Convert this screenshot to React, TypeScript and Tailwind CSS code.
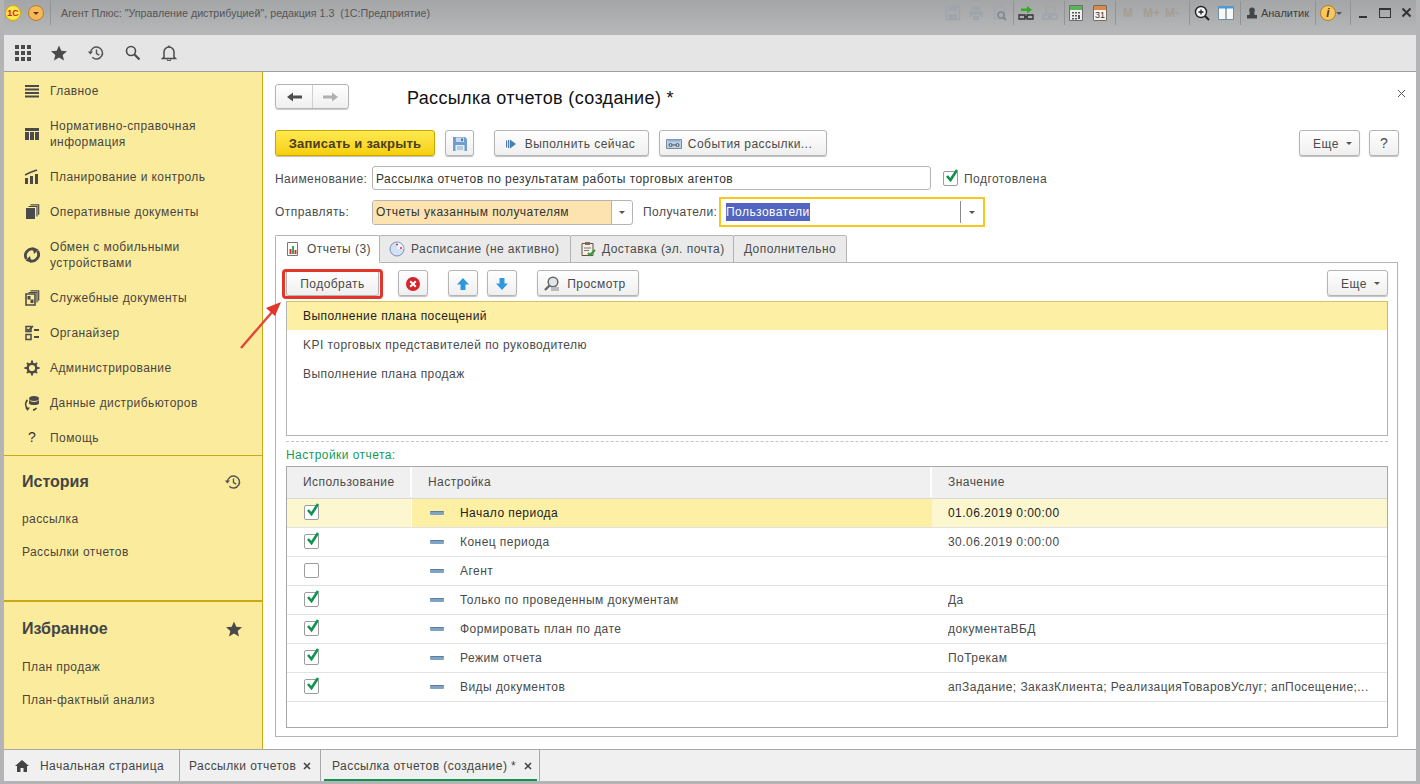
import type { ReactNode } from "react";

const F = "#4a4a4a";

function Svg({ w = 16, h = 16, children, className = "" }: { w?: number; h?: number; children: ReactNode; className?: string }) {
  return (
    <svg width={w} height={h} viewBox={`0 0 ${w} ${h}`} className={`shrink-0 ${className}`}>
      {children}
    </svg>
  );
}

const HistoryIcon = ({ c = "#555" }: { c?: string }) => (
  <Svg w={18} h={16}>
    <path d="M3.5 8a6 6 0 1 1 1.8 4.3" fill="none" stroke={c} strokeWidth="1.5" />
    <path d="M0.8 6.5h5.2L3.4 9.6z" fill={c} />
    <path d="M9.5 4.5v4l2.8 1.6" fill="none" stroke={c} strokeWidth="1.4" />
  </Svg>
);

const menuIcons: Record<string, ReactNode> = {
  main: (
    <Svg>
      <path d="M1 2h14v2H1zM1 5.5h14v2H1zM1 9h14v2H1zM1 12.5h14v2H1z" fill={F} />
    </Svg>
  ),
  nsi: (
    <Svg>
      <path d="M1 2h14v3H1zM1 6h4v8H1zM6 6h4v8H6zM11 6h4v8h-4z" fill={F} />
    </Svg>
  ),
  plan: (
    <Svg>
      <path d="M1 9h3v6H1zM6 7h3v8H6zM11 5h3v10h-3z" fill={F} />
      <path d="M1 6l5-2.500 7-2.500" fill="none" stroke={F} strokeWidth="1.400" />
    </Svg>
  ),
  docs: (
    <Svg>
      <path d="M2 4h9v11H2z" fill={F} />
      <path d="M4.500 2.500h8.500v10M6.500 0.800h8.200v10" fill="none" stroke={F} strokeWidth="1.200" />
    </Svg>
  ),
  sync: (
    <Svg>
      <path d="M2.500 12a6.500 6.500 0 0 1 8-9.500M13.500 4a6.500 6.500 0 0 1-8 9.500" fill="none" stroke={F} strokeWidth="2.800" />
      <path d="M8.500 0l6 2.500-4.500 4.500zM7.500 16l-6-2.500L6 9z" fill={F} />
    </Svg>
  ),
  service: (
    <Svg>
      <path d="M2 4h9v11H2z" fill="none" stroke={F} strokeWidth="1.600" />
      <path d="M3.500 6h3v3.500h-3zM6.500 9.500h3v3.500h-3z" fill={F} />
      <path d="M4.500 2.500h8.500v10M6.500 0.800h8.200v10" fill="none" stroke={F} strokeWidth="1.200" />
    </Svg>
  ),
  org: (
    <Svg>
      <path d="M2 1.500h5v5H2zM2 9.500h5v5H2z" fill="none" stroke={F} strokeWidth="1.500" />
      <path d="M3 4l1.500 1.500L9 1" fill="none" stroke={F} strokeWidth="1.600" />
      <path d="M10 4h5v2h-5zM10 11h5v2h-5z" fill={F} />
    </Svg>
  ),
  admin: (
    <Svg>
      <circle cx="8" cy="8" r="4.300" fill="none" stroke={F} strokeWidth="2.400" />
      <path d="M7 0.500h2v3H7zM7 12.500h2v3H7zM0.500 7h3v2h-3zM12.500 7h3v2h-3zM2.300 3.700l1.400-1.400 2 2-1.400 1.400zM10.300 11.700l1.400-1.400 2 2-1.400 1.400zM12.300 2.300l1.400 1.400-2 2-1.400-1.400zM4.300 10.300l1.400 1.400-2 2-1.400-1.400z" fill={F} />
    </Svg>
  ),
  dist: (
    <Svg>
      <ellipse cx="10" cy="3.500" rx="5" ry="2.500" fill={F} />
      <path d="M5 5v3.500c1 2 9 2 10 0V5c-2 2.500-8 2.500-10 0z" fill={F} />
      <path d="M3.500 5a6 6 0 0 0-.5 8M9 15c1.500 0 2.500-.8 3.500-2" fill="none" stroke={F} strokeWidth="1.800" />
      <path d="M1 12.500h5L3.500 16z" fill={F} />
    </Svg>
  ),
};

const menu = [
  { icon: menuIcons.main, text: "Главное" },
  { icon: menuIcons.nsi, text: "Нормативно-справочная информация", two: true },
  { icon: menuIcons.plan, text: "Планирование и контроль" },
  { icon: menuIcons.docs, text: "Оперативные документы" },
  { icon: menuIcons.sync, text: "Обмен с мобильными устройствами", two: true },
  { icon: menuIcons.service, text: "Служебные документы" },
  { icon: menuIcons.org, text: "Органайзер" },
  { icon: menuIcons.admin, text: "Администрирование" },
  { icon: menuIcons.dist, text: "Данные дистрибьюторов" },
  { icon: <span className="w-4 text-center text-[14px] text-[#333]">?</span>, text: "Помощь" },
];

function Sep({ className = "" }: { className?: string }) {
  return <div className={`h-[24px] w-px shrink-0 bg-[#949494] ${className}`} />;
}

function Caret({ c = "#555" }: { c?: string }) {
  return (
    <Svg w={6} h={3}>
      <path d="M0 0h6L3 3z" fill={c} />
    </Svg>
  );
}

function TitleBar() {
  const dim = "#9fa5ab";
  return (
    <div className="flex h-[35px] shrink-0 items-center bg-linear-to-b from-[#a4a5a7] to-[#b7b8ba] pb-[9px] pl-[5px] pr-[7px] text-[10.7px] text-[#555]">
      <div className="flex h-[16px] w-[16px] items-center justify-center rounded-full border border-[#d8a800] bg-[#fde74c] text-[9px] font-bold leading-none text-[#d3241d]">
        1С
      </div>
      <div className="ml-[7px] flex h-[16px] w-[16px] items-center justify-center rounded-full border border-[#b67f20] bg-[#f5b95a]">
        <Caret c="#5b3c10" />
      </div>
      <Sep className="ml-[6px]" />
      <span className="ml-[10px] whitespace-pre">Агент Плюс: "Управление дистрибуцией", редакция 1.3  (1С:Предприятие)</span>

      <div className="ml-auto flex items-center">
        <Svg>
          <path d="M1.500 1.500h13v13h-13z" fill="none" stroke={dim} strokeWidth="1.500" />
          <path d="M4 2h8v4H4zM4 9h8v5H4z" fill={dim} />
        </Svg>
        <Svg className="ml-[7px]">
          <path d="M4 1h8v4H4zM1 6h14v6h-3v-2H4v2H1zM5 11h6v4H5z" fill={dim} />
        </Svg>
        <Svg className="ml-[8px]">
          <path d="M2.500 1h7l3 3v10h-10z" fill="none" stroke={dim} strokeWidth="1.200" />
          <circle cx="9" cy="10" r="3" fill="none" stroke="#80878e" strokeWidth="1.500" />
          <path d="M11 12l3 3" stroke="#80878e" strokeWidth="1.800" />
        </Svg>
        <Sep className="ml-[5px]" />
        <Svg className="ml-[4px]">
          <path d="M3 3.500h6V1l5 3.800-5 3.700V6H3z" fill="#2fae1f" />
          <path d="M1 10h6v4H1zM9 10h6v4H9z" fill="none" stroke="#333" strokeWidth="1.300" />
          <path d="M6 12h4" stroke="#333" strokeWidth="1.300" />
        </Svg>
        <Svg className="ml-[8px]">
          <path d="M4 1.500h7l2 2v5H4z" fill="none" stroke={dim} strokeWidth="1.200" />
          <path d="M1 10h6v4H1zM9 10h6v4H9z" fill="none" stroke={dim} strokeWidth="1.300" />
          <path d="M6 12h4" stroke={dim} strokeWidth="1.300" />
        </Svg>
        <Sep className="ml-[6px]" />
        <Svg w={14} className="ml-[4px]">
          <path d="M.5.500h13v15H.5z" fill="#f0f0f0" stroke="#6d6d6d" />
          <path d="M1 1h12v4H1z" fill="#58b558" />
          <path d="M3 7h2v1.500H3zM6 7h2v1.500H6zM9 7h2v1.500H9zM3 10h2v1.500H3zM6 10h2v1.500H6zM9 10h2v4H9zM3 13h2v1.500H3zM6 13h2v1.500H6z" fill="#555" />
        </Svg>
        <div className="ml-[10px] flex h-[16px] w-[14px] flex-col overflow-hidden rounded-[1px] border border-[#7a6a58] bg-[#f4f4f4]">
          <div className="h-[4px] shrink-0 bg-[#d98a4a]" />
          <span className="text-center text-[9px] leading-[11px] text-[#333]">31</span>
        </div>
        <Sep className="ml-[8px]" />
        <div className="ml-[7px] flex items-center text-[12px] font-bold text-[#a59d93]">
          <span className="w-[20px]">M</span>
          <span className="w-[22px]">M+</span>
          <span className="w-[16px]">M-</span>
        </div>
        <Sep className="ml-[8px]" />
        <Svg className="ml-[4px]">
          <circle cx="7" cy="7" r="5.500" fill="#f5f5f5" stroke="#222" strokeWidth="1.400" />
          <path d="M4.500 7h5M7 4.500v5" stroke="#222" strokeWidth="1.300" />
          <path d="M11 11l4 4" stroke="#222" strokeWidth="2" />
        </Svg>
        <Svg className="ml-[8px]">
          <path d="M.5 1.500h15v13H.5z" fill="#f8f8f8" stroke="#6f8ca8" />
          <path d="M1 1h14v2.500H1z" fill="#4d9ad4" />
          <path d="M8 3v11" stroke="#46637f" />
        </Svg>
        <Sep className="ml-[6px]" />
        <Svg w={12} h={12} className="ml-[5px]">
          <circle cx="6" cy="3.300" r="2.800" fill="#444" />
          <path d="M3.500 5.500h5v2.500H11v3.500H1V8h2.500z" fill="#444" />
        </Svg>
        <span className="ml-[3px] text-[11px] text-[#3d3d3d]">Аналитик</span>
        <Sep className="ml-[6px]" />
        <div className="ml-[4px] flex h-[16px] w-[16px] items-center justify-center rounded-full border border-[#b67f20] bg-[#f8c860] text-[12px] font-bold italic leading-none text-[#5b3c10]">
          i
        </div>
        <Caret c="#555" />
        <Sep className="ml-[8px]" />
        <div className="ml-[8px] mt-[8px] h-[2px] w-[8px] bg-[#333]" />
        <div className="ml-[12px] h-[10px] w-[12px] border border-t-2 border-[#333]" />
        <Svg w={12} h={12} className="ml-[10px]">
          <path d="M1.500 1.500l8 8M9.500 1.500l-8 8" stroke="#333" strokeWidth="2" />
        </Svg>
      </div>
    </div>
  );
}

function TopBar() {
  return (
    <div className="flex h-[37px] shrink-0 items-center gap-[20px] border-b border-[#a0a0a0] bg-[#e5e5e5] pl-[10px]">
      <Svg w={18} h={18}>
        <path d="M1 1h4v4H1zM7 1h4v4H7zM13 1h4v4h-4zM1 7h4v4H1zM7 7h4v4H7zM13 7h4v4h-4zM1 13h4v4H1zM7 13h4v4H7zM13 13h4v4h-4z" fill={F} />
      </Svg>
      <Svg className="-ml-px">
        <path d="M8 .5l2.300 5.200 5.700.5-4.300 3.700 1.300 5.600L8 12.500l-5 3 1.300-5.600L0 6.200l5.700-.5z" fill={F} />
      </Svg>
      <HistoryIcon />
      <Svg>
        <circle cx="6" cy="6" r="4.500" fill="none" stroke={F} strokeWidth="1.600" />
        <path d="M9.500 9.500l5 5" stroke={F} strokeWidth="2.200" />
      </Svg>
      <Svg>
        <path d="M3 12V7a5 5 0 0 1 10 0v5l1.500 1.500h-13z" fill="none" stroke={F} strokeWidth="1.500" />
        <path d="M6.500 14.500a1.500 1.500 0 0 0 3 0M8 .5v2" stroke={F} strokeWidth="1.300" fill="none" />
      </Svg>
    </div>
  );
}

function Sidebar() {
  return (
    <aside className="flex w-[259px] shrink-0 flex-col border-r border-[#c9a914] bg-[#fbec9d] text-[12px] tracking-[0.42px] text-[#4a4440]">
      <div className="flex h-[384px] shrink-0 flex-col border-b border-[#c9a914] pt-[1px]">
        {menu.map((m) => (
          <div key={m.text} className={`flex items-center ${m.two ? "h-[51px]" : "h-[35px]"} shrink-0`}>
            <div className="ml-[20px] flex w-[26px] shrink-0">{m.icon}</div>
            <span className={`leading-[16px] ${m.two ? "w-[175px]" : ""}`}>{m.text}</span>
          </div>
        ))}
      </div>
      <div className="flex h-[146px] shrink-0 flex-col border-b-2 border-[#c9a914] pl-[18px] pr-[20px]">
        <div className="mt-[15px] flex h-[22px] items-center justify-between">
          <span className="text-[16px] font-bold tracking-normal text-[#444]">История</span>
          <HistoryIcon />
        </div>
        <div className="mt-[16px] flex h-[20px] items-center">рассылка</div>
        <div className="mt-[13px] flex h-[20px] items-center">Рассылки отчетов</div>
      </div>
      <div className="flex flex-1 flex-col pl-[18px] pr-[20px]">
        <div className="mt-[16px] flex h-[22px] items-center justify-between">
          <span className="text-[16px] font-bold tracking-normal text-[#444]">Избранное</span>
          <Svg>
            <path d="M8 .5l2.300 5.200 5.700.5-4.300 3.700 1.300 5.600L8 12.500l-5 3 1.300-5.600L0 6.200l5.700-.5z" fill={F} />
          </Svg>
        </div>
        <div className="mt-[17px] flex h-[20px] items-center">План продаж</div>
        <div className="mt-[13px] flex h-[20px] items-center">План-фактный анализ</div>
      </div>
    </aside>
  );
}

function Btn({ children, className = "", yellow = false }: { children: ReactNode; className?: string; yellow?: boolean }) {
  return (
    <div
      className={`relative flex h-[26px] shrink-0 items-center justify-center rounded-[3px] border pt-[1px] shadow-[0_1px_1px_rgba(0,0,0,0.25)] ${
        yellow
          ? "border-[#c8a800] bg-linear-to-b from-[#ffe94d] to-[#f7cf00] font-bold tracking-[0.2px] text-[#4a4020]"
          : "border-[#b4b4b4] bg-linear-to-b from-white to-[#efefef] tracking-[0.45px] text-[#4a4a4a]"
      } ${className}`}
    >
      {children}
    </div>
  );
}

function CheckBox({ on = true }: { on?: boolean }) {
  return (
    <div className="relative h-[15px] w-[15px] shrink-0 rounded-[2px] border border-[#9c9c9c] bg-white">
      {on && (
        <svg width="17" height="16" viewBox="0 0 17 16" className="absolute -top-[4px] left-0">
          <path d="M3 8l3.500 4L13 2" fill="none" stroke="#11934f" strokeWidth="2.600" />
        </svg>
      )}
    </div>
  );
}

function Dash() {
  return <div className="h-[4px] w-[14px] rounded-[1px] border-t border-[#5d7d99] bg-[#7fa3c4]" />;
}

const rows = [
  { on: true, name: "Начало периода", val: "01.06.2019 0:00:00", cur: true },
  { on: true, name: "Конец периода", val: "30.06.2019 0:00:00" },
  { on: false, name: "Агент", val: "" },
  { on: true, name: "Только по проведенным документам", val: "Да" },
  { on: true, name: "Формировать план по дате", val: "документаВБД" },
  { on: true, name: "Режим отчета", val: "ПоТрекам" },
  { on: true, name: "Виды документов", val: "апЗадание; ЗаказКлиента; РеализацияТоваровУслуг; апПосещение;..." },
];

function ReportsTab() {
  return (
    <div className="relative flex h-[475px] flex-col border border-[#b4b4b4] pl-[10px] pr-[9px] pt-[7px] tracking-[0.45px]">
      <div className="flex h-[26px] shrink-0 items-center">
        <Btn className="w-[93px]">
          Подобрать
          <span className="absolute -bottom-[4px] -left-[5px] -right-[5px] -top-[2px] rounded-[4px] border-[3px] border-[#e2362b]" />
        </Btn>
        <Btn className="ml-[19px] w-[30px]">
          <Svg>
            <circle cx="8" cy="8" r="7" fill="#d6232c" />
            <path d="M5.200 5.200l5.600 5.600M10.800 5.200l-5.600 5.600" stroke="#fff" strokeWidth="2" />
          </Svg>
        </Btn>
        <Btn className="ml-[20px] w-[30px]">
          <Svg w={14} h={14}>
            <path d="M7 1l6 6.500H9.500V13h-5V7.500H1z" fill="#2f97dc" />
          </Svg>
        </Btn>
        <Btn className="ml-[9px] w-[30px]">
          <Svg w={14} h={14}>
            <path d="M7 13L1 6.500h3.500V1h5v5.500H13z" fill="#2f97dc" />
          </Svg>
        </Btn>
        <Btn className="ml-[20px] w-[102px] gap-[7px] pr-[6px]">
          <Svg>
            <circle cx="9" cy="6" r="4.800" fill="#dfe5ea" stroke="#666" strokeWidth="1.500" />
            <path d="M5.500 9.500L1 14" stroke="#666" strokeWidth="2.400" />
            <path d="M7 11h8v4H7z" fill="#bbb" />
          </Svg>
          Просмотр
        </Btn>
        <Btn className="ml-auto w-[61px] gap-[7px] pl-[6px]">
          Еще <Caret />
        </Btn>
      </div>

      <div className="mt-[5px] h-[135px] shrink-0 border border-[#b4b4b4] border-t-[#d9c45c]">
        <div className="flex h-[28px] items-center bg-[#fdf0a5] pl-[16px] text-[#222]">Выполнение плана посещений</div>
        <div className="flex h-[29px] items-center pl-[16px]">KPI торговых представителей по руководителю</div>
        <div className="flex h-[29px] items-center pl-[16px]">Выполнение плана продаж</div>
      </div>

      <div className="mt-[5px] shrink-0 border-t border-dashed border-[#c4c4c4]" />
      <div className="mt-[5px] flex h-[16px] shrink-0 items-center text-[#169a55]">Настройки отчета:</div>

      <div className="mt-[3px] flex h-[262px] shrink-0 flex-col border border-[#a8a8a8]">
        <div className="grid h-[32px] shrink-0 grid-cols-[125px_520px_1fr] border-b border-[#d8d8d8] bg-[#f0f0f0] pb-[1px]">
          <div className="flex items-center border-r-2 border-white pl-[16px]">Использование</div>
          <div className="flex items-center border-r-2 border-white pl-[16px]">Настройка</div>
          <div className="flex items-center pl-[16px]">Значение</div>
        </div>
        {rows.map((r) => (
          <div
            key={r.name}
            className={`grid h-[29px] shrink-0 grid-cols-[125px_520px_1fr] border-b border-[#e2e2e2] ${r.cur ? "bg-[#fdf7cf] text-[#222]" : ""}`}
          >
            <div className={`flex items-center pb-[2px] pl-[17px] ${r.cur ? "border-r border-white" : ""}`}>
              <CheckBox on={r.on} />
            </div>
            <div className={`flex items-center pl-[18px] ${r.cur ? "bg-[#fdf0a5]" : ""}`}>
              <Dash />
              <span className="ml-[16px]">{r.name}</span>
            </div>
            <div className="flex min-w-0 items-center pl-[16px]">
              <span className="truncate">{r.val}</span>
            </div>
          </div>
        ))}
      </div>

      <svg width="46" height="50" viewBox="0 0 46 50" className="absolute left-[-36px] top-[36px]">
        <path d="M1 49L33 12" stroke="#e2453a" strokeWidth="2.400" />
        <path d="M41 3L26 9l9 8z" fill="#e2362b" />
      </svg>
    </div>
  );
}

function Tabs() {
  const cls = "flex h-[28px] shrink-0 items-center border border-[#b4b4b4] rounded-t-[2px] tracking-[0.45px]";
  return (
    <div className="-mb-px flex">
      <div className={`${cls} relative z-10 w-[105px] border-b-white bg-white pl-[10px] tracking-[0.3px]`}>
        <Svg w={14} className="mr-[7px]">
          <path d="M1.500 1.500h10v13h-10z" fill="#fff" stroke="#777" />
          <path d="M3.500 8h2v5h-2z" fill="#d0342c" />
          <path d="M6 5h2v8H6z" fill="#3aa655" />
          <path d="M8.500 9h2v4h-2z" fill="#d0342c" />
        </Svg>
        Отчеты (3)
      </div>
      <div className={`${cls} -ml-px w-[192px] bg-[#eaeaea] pl-[9px]`}>
        <Svg className="mr-[6px]">
          <circle cx="8" cy="8" r="7" fill="#d3e1f5" stroke="#7d8fb8" />
          <path d="M8 1.500A6.500 6.500 0 0 1 14.500 8H8z" fill="#eef2fa" />
          <circle cx="8" cy="3.500" r="1" fill="#d0342c" />
          <circle cx="12" cy="7" r="1" fill="#d0342c" />
        </Svg>
        Расписание (не активно)
      </div>
      <div className={`${cls} -ml-px w-[164px] bg-[#eaeaea] pl-[9px]`}>
        <Svg className="mr-[6px]">
          <path d="M2 2.500h11v12H2z" fill="#f4f0e8" stroke="#6d4a3a" />
          <path d="M5 1h5v3H5z" fill="#8a6a58" />
          <path d="M4 7h7M4 9.500h5" stroke="#777" />
          <path d="M8 12l2 2 5-5" fill="none" stroke="#2c9a3a" strokeWidth="2" />
        </Svg>
        Доставка (эл. почта)
      </div>
      <div className={`${cls} -ml-px w-[114px] justify-center bg-[#eaeaea]`}>Дополнительно</div>
    </div>
  );
}

function Form() {
  return (
    <main className="flex min-w-0 flex-1 flex-col bg-white pl-[12px] pr-[17px] pt-[12px] text-[12px] text-[#4a4a4a]">
      <div className="flex h-[25px] shrink-0 items-center">
        <div className="flex h-[25px] w-[74px] rounded-[3px] border border-[#b4b4b4] bg-linear-to-b from-white to-[#efefef] shadow-[0_1px_1px_rgba(0,0,0,0.2)]">
          <div className="flex w-[37px] items-center justify-center border-r border-[#cfcfcf]">
            <Svg w={15} h={10}>
              <path d="M0 5l6-4.500V3.500h9v3H6v3z" fill="#4d4d4d" />
            </Svg>
          </div>
          <div className="flex flex-1 items-center justify-center">
            <Svg w={15} h={10}>
              <path d="M15 5L9 .5V3.500H0v3h9v3z" fill="#b0b0b0" />
            </Svg>
          </div>
        </div>
        <h1 className="ml-[58px] mt-[4px] text-[18px] leading-[25px] tracking-[0.35px] text-[#111]">Рассылка отчетов (создание) *</h1>
        <svg width="9" height="9" viewBox="0 0 9 9" className="ml-auto mr-[-7px] -mt-[7px]">
          <path d="M1 1l7 7M8 1L1 8" stroke="#555" strokeWidth="1" />
        </svg>
      </div>

      <div className="mt-[21px] flex h-[26px] shrink-0 items-center">
        <Btn yellow className="w-[160px] text-[13px]">Записать и закрыть</Btn>
        <Btn className="ml-[10px] w-[29px]">
          <Svg>
            <path d="M1 1h12l2 2v12H1z" fill="#6f9fd0" />
            <path d="M4 1.500h8v4.500H4z" fill="#c9daee" />
            <path d="M9 2.500h2v2.500H9z" fill="#4f78a6" />
            <path d="M3.500 9h9v6h-9z" fill="#e3ebf5" />
            <path d="M5 11h6M5 13h6" stroke="#8fa9c6" />
          </Svg>
        </Btn>
        <Btn className="ml-[20px] w-[155px] gap-[9px] pr-[2px]">
          <Svg w={10} h={10}>
            <path d="M0 1.500h1.200v7H0zM2 1h1.300v8H2zM4 .5L10 5 4 9.500z" fill="#4a7fb0" />
          </Svg>
          Выполнить сейчас
        </Btn>
        <Btn className="ml-[10px] w-[168px] gap-[6px] pr-[8px]">
          <Svg w={16} h={12}>
            <path d="M.5 1.500h15v9H.5z" fill="#b9d0e6" stroke="#7a8a99" />
            <path d="M2 1.500h12v2H2z" fill="#8eb0cf" />
            <circle cx="4.500" cy="7" r="1.500" fill="none" stroke="#555" />
            <circle cx="11.500" cy="7" r="1.500" fill="none" stroke="#555" />
            <path d="M6 7h4" stroke="#555" />
          </Svg>
          События рассылки...
        </Btn>
        <Btn className="ml-auto w-[61px] gap-[7px] pl-[6px]">
          Еще <Caret />
        </Btn>
        <Btn className="ml-[9px] w-[30px] text-[14px]">?</Btn>
      </div>

      <div className="mt-[10px] flex h-[24px] shrink-0 items-center tracking-[0.45px]">
        <label className="w-[97px] pt-[1px]">Наименование:</label>
        <div className="flex h-[24px] w-[559px] items-center rounded-[3px] border border-[#b4b4b4] pl-[3px] pt-[1px] text-[#333]">
          Рассылка отчетов по результатам работы торговых агентов
        </div>
        <div className="ml-[12px]">
          <CheckBox />
        </div>
        <span className="ml-[6px] pt-[1px]">Подготовлена</span>
      </div>

      <div className="mt-[7px] flex h-[30px] shrink-0 items-center tracking-[0.45px]">
        <label className="w-[97px]">Отправлять:</label>
        <div className="flex h-[25px] w-[261px] items-center rounded-[3px] border border-[#b4b4b4]">
          <div className="flex h-full flex-1 items-center rounded-l-[3px] bg-[#fde3b0] pl-[3px] text-[#333]">Отчеты указанным получателям</div>
          <div className="flex h-full w-[21px] items-center justify-center border-l border-[#b4b4b4]">
            <Caret />
          </div>
        </div>
        <label className="ml-[10px] w-[76px]">Получатели:</label>
        <div className="flex h-[30px] w-[266px] items-center border-2 border-[#f7c91d] pl-[5px]">
          <span className="bg-[#5265c0] text-white">Пользователи</span>
          <div className="ml-auto flex h-[22px] w-[23px] items-center justify-center border-l border-[#8a8a8a]">
            <Caret />
          </div>
        </div>
      </div>

      <div className="mr-[1px] mt-[8px]">
        <Tabs />
        <ReportsTab />
      </div>
    </main>
  );
}

function BottomTabs() {
  const X = () => (
    <svg width="8" height="8" viewBox="0 0 8 8">
      <path d="M1 1l6 6M7 1L1 7" stroke="#444" strokeWidth="1.600" />
    </svg>
  );
  return (
    <div className="flex h-[32px] shrink-0 items-stretch border-t border-[#a8a8a8] bg-[#f0f0f0] text-[12px] tracking-[0.45px] text-[#444]">
      <div className="flex w-[176px] items-center border-r border-[#a8a8a8] pl-[11px]">
        <Svg w={14} h={12} className="mr-[11px]">
          <path d="M7 0l7 6h-2v6H8.500V8h-3v4H2V6H0z" fill="#444" />
        </Svg>
        Начальная страница
      </div>
      <div className="flex w-[141px] items-center border-r border-[#a8a8a8] pl-[9px]">
        Рассылки отчетов
        <span className="ml-[7px] flex"><X /></span>
      </div>
      <div className="flex w-[219px] items-center border-r border-[#a8a8a8] pl-[3px] pr-[2px]">
        <div className="flex h-full w-full items-center border-b-2 border-[#11934f] pl-[8px] pt-[2px]">
          Рассылка отчетов (создание) *
          <span className="ml-[8px] flex"><X /></span>
        </div>
      </div>
    </div>
  );
}

export default function App() {
  return (
    <div className="flex h-[784px] w-[1420px] flex-col overflow-hidden border-b-[3px] border-l-[4px] border-r-[4px] border-[#b4b4b6] bg-[#b4b4b6] font-['Liberation_Sans',Arial,sans-serif]">
      <div className="-mx-[4px] shrink-0">
        <TitleBar />
      </div>
      <TopBar />
      <div className="flex min-h-0 flex-1">
        <Sidebar />
        <Form />
      </div>
      <BottomTabs />
    </div>
  );
}
